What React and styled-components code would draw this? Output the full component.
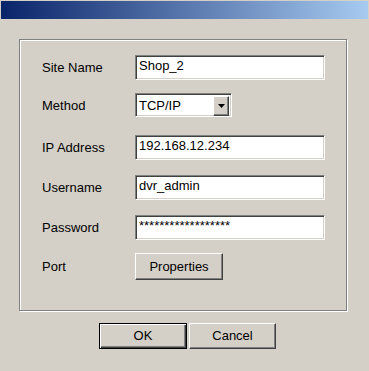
import React from 'react';
import styled, { createGlobalStyle } from 'styled-components';

const Global = createGlobalStyle`
  html, body {
    margin: 0;
    padding: 0;
    background: #d4d0c8;
  }
  body {
    font-family: "Liberation Sans", Arial, sans-serif;
    font-size: 13px;
    color: #000;
  }
`;

const Window = styled.div`
  width: 369px;
  height: 371px;
  box-sizing: border-box;
  padding: 1px 1px 0;
  background: #d4d0c8;
  display: flex;
  flex-direction: column;
`;

const TitleBar = styled.div`
  height: 18px;
  background: linear-gradient(to right, #0a246a, #a6caf0);
`;

const GroupBox = styled.div`
  margin: 20px 0 0 18px;
  width: 328px;
  height: 272px;
  box-sizing: border-box;
  border: 1px solid #808080;
  box-shadow: inset 1px 1px 0 #fff, 1px 1px 0 #fff;
  padding: 15px 0 0 22px;
  display: flex;
  flex-direction: column;
`;

const Row = styled.div`
  display: flex;
  align-items: center;
  margin-top: ${p => p.$gap}px;
`;

const Label = styled.span`
  width: 93px;
  flex: none;
  line-height: 15px;
`;

const sunken = `
  box-sizing: border-box;
  border: 1px solid;
  border-color: #808080 #fff #fff #808080;
  box-shadow: inset 1px 1px 0 #404040, inset -1px -1px 0 #d4d0c8;
  background: #fff;
`;

const TextField = styled.input`
  ${sunken}
  width: 190px;
  height: 25px;
  margin: 0;
  padding: 2px 2px 6px 3px;
  font: 13px/15px "Liberation Sans", Arial, sans-serif;
  color: #000;
  outline: none;
`;

const SelectBox = styled.div`
  ${sunken}
  width: 97px;
  height: 24px;
  padding: 2px;
  display: flex;
`;

const SelectText = styled.span`
  flex: 1;
  padding: 2px 0 0 1px;
  line-height: 15px;
`;

const raised = `
  box-sizing: border-box;
  background: #d4d0c8;
  border: 1px solid;
  border-color: #fff #404040 #404040 #fff;
  box-shadow: inset -1px -1px 0 #808080;
`;

const DropButton = styled.div`
  ${raised}
  width: 16px;
  height: 20px;
  display: flex;
  align-items: center;
  justify-content: center;
`;

const Button = styled.button`
  box-sizing: border-box;
  width: ${p => p.$w}px;
  height: ${p => p.$h}px;
  margin: 0;
  padding: 0 0 1px;
  font: 13px "Liberation Sans", Arial, sans-serif;
  color: #000;
  background: #d4d0c8;
  border: 1px solid;
  border-color: ${p => (p.$default ? '#000' : '#fff #404040 #404040 #fff')};
  box-shadow: ${p =>
    p.$default
      ? 'inset 1px 1px 0 #fff, inset -1px -1px 0 #404040, inset -2px -2px 0 #808080'
      : 'inset -1px -1px 0 #808080'};
`;

const Actions = styled.div`
  display: flex;
  justify-content: center;
  gap: 2px;
  margin-top: 12px;
  padding-left: 6px;
`;

const rows = [
  { label: 'Site Name', gap: 0, value: 'Shop_2' },
  { label: 'Method', gap: 13, select: 'TCP/IP' },
  { label: 'IP Address', gap: 18, value: '192.168.12.234' },
  { label: 'Username', gap: 15, value: 'dvr_admin' },
  { label: 'Password', gap: 15, value: '******************' },
  { label: 'Port', gap: 13, button: 'Properties' },
];

export default function App() {
  return (
    <Window>
      <Global />
      <TitleBar />
      <GroupBox>
        {rows.map(r => (
          <Row key={r.label} $gap={r.gap}>
            <Label>{r.label}</Label>
            {r.select ? (
              <SelectBox>
                <SelectText>{r.select}</SelectText>
                <DropButton>
                  <svg width="7" height="4" viewBox="0 0 7 4">
                    <path d="M0 0h7L3.5 4z" fill="#000" />
                  </svg>
                </DropButton>
              </SelectBox>
            ) : r.button ? (
              <Button $w={88} $h={27}>{r.button}</Button>
            ) : (
              <TextField defaultValue={r.value} readOnly />
            )}
          </Row>
        ))}
      </GroupBox>
      <Actions>
        <Button $w={88} $h={26} $default>OK</Button>
        <Button $w={87} $h={26}>Cancel</Button>
      </Actions>
    </Window>
  );
}
